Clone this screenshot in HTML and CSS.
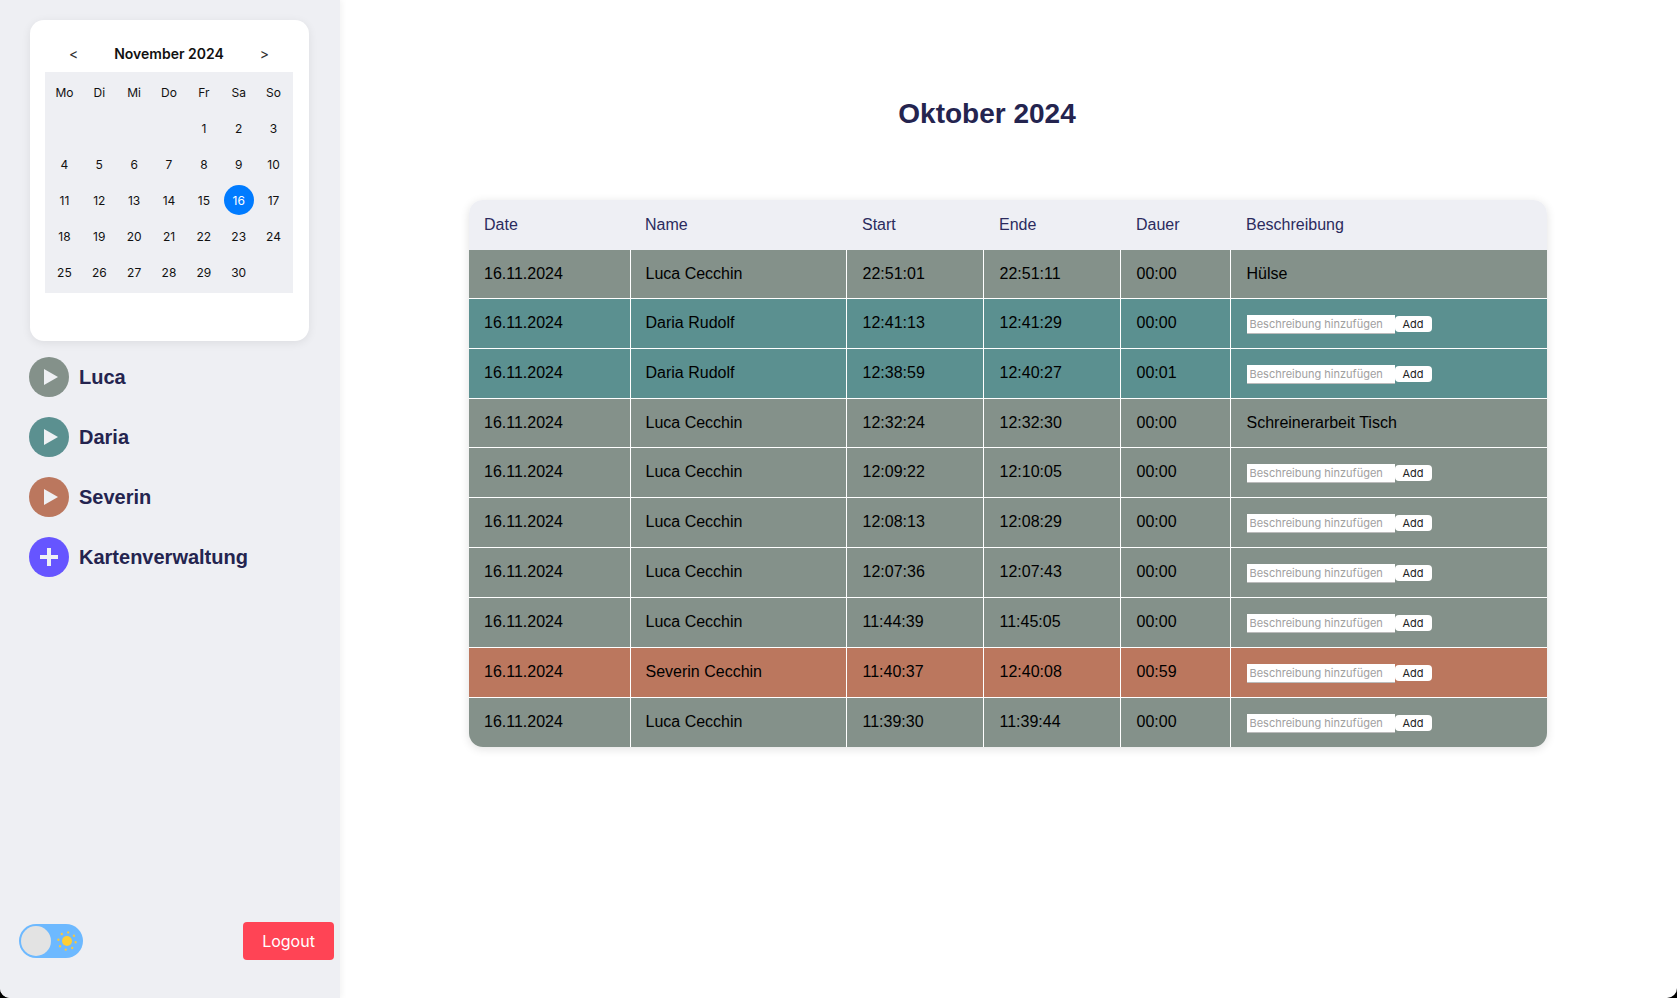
FILE: index.html
```html
<!DOCTYPE html>
<html lang="de">
<head>
    <meta charset="UTF-8">
    <meta name="viewport" content="width=device-width, initial-scale=1.0">
    <title>Zeiterfassung</title>
    <link rel="stylesheet" href="styles.css">
</head>
<body>
    <div class="sidebar">
        <div class="calendar">
            <div class="cal-head">
                <button class="cal-nav">&lt;</button>
                <span class="cal-title">November 2024</span>
                <button class="cal-nav">&gt;</button>
            </div>
            <div class="cal-grid">
                <span>Mo</span><span>Di</span><span>Mi</span><span>Do</span><span>Fr</span><span>Sa</span><span>So</span>
                <span></span><span></span><span></span><span></span><span>1</span><span>2</span><span>3</span>
                <span>4</span><span>5</span><span>6</span><span>7</span><span>8</span><span>9</span><span>10</span>
                <span>11</span><span>12</span><span>13</span><span>14</span><span>15</span><span class="today">16</span><span>17</span>
                <span>18</span><span>19</span><span>20</span><span>21</span><span>22</span><span>23</span><span>24</span>
                <span>25</span><span>26</span><span>27</span><span>28</span><span>29</span><span>30</span><span></span>
            </div>
        </div>

        <div class="people">
            <div class="person">
                <span class="round-btn luca"><svg width="40" height="40" viewBox="0 0 40 40"><polygon points="15,12 29,20 15,28" fill="#eef0f3"/></svg></span>
                Luca
            </div>
            <div class="person">
                <span class="round-btn daria"><svg width="40" height="40" viewBox="0 0 40 40"><polygon points="15,12 29,20 15,28" fill="#eef0f3"/></svg></span>
                Daria
            </div>
            <div class="person">
                <span class="round-btn severin"><svg width="40" height="40" viewBox="0 0 40 40"><polygon points="15,12 29,20 15,28" fill="#eef0f3"/></svg></span>
                Severin
            </div>
            <div class="person">
                <span class="round-btn cards"><svg width="40" height="40" viewBox="0 0 40 40"><path d="M11 20h18M20 11v18" stroke="#eef0f3" stroke-width="4"/></svg></span>
                Kartenverwaltung
            </div>
        </div>

        <div class="side-foot">
            <div class="toggle">
                <span class="knob"></span>
                <svg class="sun" width="24" height="24" viewBox="0 0 24 24">
                    <circle cx="12" cy="12" r="5" fill="#ffcf33"/>
                    <g fill="#f5c842" transform="rotate(8 12 12)">
                        <circle cx="12" cy="3.300" r="1.200"/>
                        <circle cx="18.150" cy="5.850" r="1.200"/>
                        <circle cx="20.700" cy="12" r="1.200"/>
                        <circle cx="18.150" cy="18.150" r="1.200"/>
                        <circle cx="12" cy="20.700" r="1.200"/>
                        <circle cx="5.850" cy="18.150" r="1.200"/>
                        <circle cx="3.300" cy="12" r="1.200"/>
                        <circle cx="5.850" cy="5.850" r="1.200"/>
                    </g>
                </svg>
            </div>
            <button class="logout">Logout</button>
        </div>
    </div>

    <div class="main">
        <h1>Oktober 2024</h1>
        <div class="table-wrap">
            <table>
                <thead>
                    <tr><th class="c-date">Date</th><th class="c-name">Name</th><th class="c-time">Start</th><th class="c-time">Ende</th><th class="c-dur">Dauer</th><th>Beschreibung</th></tr>
                </thead>
                <tbody>
                    <tr class="luca first"><td>16.11.2024</td><td>Luca Cecchin</td><td>22:51:01</td><td>22:51:11</td><td>00:00</td><td>Hülse</td></tr>
                    <tr class="daria"><td>16.11.2024</td><td>Daria Rudolf</td><td>12:41:13</td><td>12:41:29</td><td>00:00</td><td><input placeholder="Beschreibung hinzufügen"><button class="add">Add</button></td></tr>
                    <tr class="daria"><td>16.11.2024</td><td>Daria Rudolf</td><td>12:38:59</td><td>12:40:27</td><td>00:01</td><td><input placeholder="Beschreibung hinzufügen"><button class="add">Add</button></td></tr>
                    <tr class="luca plain"><td>16.11.2024</td><td>Luca Cecchin</td><td>12:32:24</td><td>12:32:30</td><td>00:00</td><td>Schreinerarbeit Tisch</td></tr>
                    <tr class="luca"><td>16.11.2024</td><td>Luca Cecchin</td><td>12:09:22</td><td>12:10:05</td><td>00:00</td><td><input placeholder="Beschreibung hinzufügen"><button class="add">Add</button></td></tr>
                    <tr class="luca"><td>16.11.2024</td><td>Luca Cecchin</td><td>12:08:13</td><td>12:08:29</td><td>00:00</td><td><input placeholder="Beschreibung hinzufügen"><button class="add">Add</button></td></tr>
                    <tr class="luca"><td>16.11.2024</td><td>Luca Cecchin</td><td>12:07:36</td><td>12:07:43</td><td>00:00</td><td><input placeholder="Beschreibung hinzufügen"><button class="add">Add</button></td></tr>
                    <tr class="luca"><td>16.11.2024</td><td>Luca Cecchin</td><td>11:44:39</td><td>11:45:05</td><td>00:00</td><td><input placeholder="Beschreibung hinzufügen"><button class="add">Add</button></td></tr>
                    <tr class="severin"><td>16.11.2024</td><td>Severin Cecchin</td><td>11:40:37</td><td>12:40:08</td><td>00:59</td><td><input placeholder="Beschreibung hinzufügen"><button class="add">Add</button></td></tr>
                    <tr class="luca"><td>16.11.2024</td><td>Luca Cecchin</td><td>11:39:30</td><td>11:39:44</td><td>00:00</td><td><input placeholder="Beschreibung hinzufügen"><button class="add">Add</button></td></tr>
                </tbody>
            </table>
        </div>
    </div>
</body>
</html>
```

FILE: styles.css
```css
html { height: 998px; background: #000; }
body { margin: 0; display: flex; height: 998px; overflow: hidden; border-radius: 0 0 10px 10px; background: #fff; font-family: "Liberation Sans", Arial, sans-serif; color: #000; }

.luca { background-color: #84918a; }
.daria { background-color: #5b9090; }
.severin { background-color: #bb775e; }
.cards { background-color: #6655ff; }

/* sidebar */
.sidebar { width: 340px; flex: none; box-sizing: border-box; height: 998px; padding: 20px 6px 38px 19px; background: #eeeff3; box-shadow: 2px 0 6px rgba(0, 0, 0, 0.05); display: flex; flex-direction: column; }

.calendar { width: 279px; height: 321px; margin-left: 11px; box-sizing: border-box; padding: 15px 16px 0 15px; background: #fff; border-radius: 14px; box-shadow: 0 2px 10px rgba(0, 0, 0, 0.08); font-family: Inter, sans-serif; }
.cal-head { display: flex; align-items: center; justify-content: space-between; height: 37px; padding: 0 24px; }
.cal-title { font-size: 14px; font-weight: 600; color: #111; }
.cal-nav { border: none; background: none; padding: 0; font-family: Inter, sans-serif; font-size: 14px; color: #333; }
.cal-grid { display: grid; grid-template-columns: repeat(7, 1fr); grid-auto-rows: 36px; height: 221px; padding: 2px 2px 0; box-sizing: border-box; background: #eeeff3; font-size: 12px; color: #111; }
.cal-grid span { display: flex; align-items: center; justify-content: center; justify-self: center; width: 30px; height: 30px; margin-top: 3px; border-radius: 50%; }
.cal-grid .today { background: #007bff; color: #fff; }

.people { display: flex; flex-direction: column; gap: 20px; margin: 16px 0 0 10px; }
.person { display: flex; align-items: center; gap: 10px; height: 40px; font-size: 20px; font-weight: bold; color: #24244f; }
.round-btn { width: 40px; height: 40px; border-radius: 50%; display: block; }
.round-btn svg { display: block; }

.side-foot { margin-top: auto; display: flex; align-items: center; justify-content: space-between; }
.toggle { width: 64px; height: 34px; box-sizing: border-box; padding: 2px; border-radius: 17px; background: #6db9ff; display: flex; align-items: center; }
.knob { width: 30px; height: 30px; flex: none; border-radius: 50%; background: #e3e3e3; }
.sun { margin-left: 4px; flex: none; }
.logout { width: 91px; height: 38px; border: none; border-radius: 4px; background: #ff4455; color: #fff; font-family: Inter, sans-serif; font-size: 16px; }

/* main */
.main { flex: 1; padding: 0 130px 0 129px; }
h1 { margin: 97px 42px 0 0; height: 34px; line-height: 34px; font-size: 28px; font-weight: bold; text-align: center; color: #24244f; }
.table-wrap { margin-top: 69px; border-radius: 14px; overflow: hidden; box-shadow: 0 2px 10px rgba(0, 0, 0, 0.12); }
table { width: 100%; border-collapse: collapse; table-layout: fixed; font-size: 16px; }
th { height: 50px; padding: 0 15px; box-sizing: border-box; background: #eeeff4; font-weight: normal; text-align: left; color: #2b2b5e; }
td { height: 50px; padding: 0 15px; border: 1px solid #fff; box-sizing: border-box; white-space: nowrap; }
th:nth-child(n+3), td:nth-child(n+3) { padding-left: 16px; }
tr:last-child td { border-bottom: none; }
td:first-child { border-left: none; }
td:last-child { border-right: none; }
.first td { height: 48px; border-top: none; }
.plain td { height: 49px; }
.c-date { width: 161px; }
.c-name { width: 216px; }
.c-time { width: 137px; }
.c-dur { width: 110px; }

input { width: 148px; height: 19px; margin-top: 2px; box-sizing: border-box; padding: 0 3px; border: none; border-bottom: 1px solid #bbb; background: #fff; font-family: Inter, sans-serif; font-size: 11px; vertical-align: middle; }
input::placeholder { color: #a0a0a0; }
.add { width: 37px; height: 16px; margin-top: 2px; padding: 0; border: none; border-radius: 4px; background: #fff; font-family: Inter, sans-serif; font-size: 11px; color: #222; vertical-align: middle; }
```
